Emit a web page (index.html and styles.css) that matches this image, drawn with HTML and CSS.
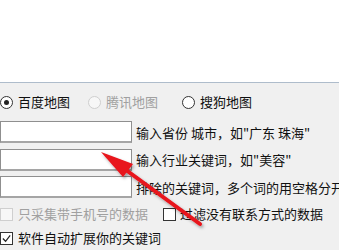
FILE: index.html
```html
<!DOCTYPE html>
<html>
<head>
<meta charset="utf-8">
<link rel="stylesheet" href="styles.css">
</head>
<body>
<div class="top"></div>
<div class="panel">
  <div class="radios">
    <label class="opt"><span class="radio checked"></span><span class="txt">百度地图</span></label>
    <label class="opt opt2 disabled"><span class="radio"></span><span class="txt">腾讯地图</span></label>
    <label class="opt opt3"><span class="radio"></span><span class="txt">搜狗地图</span></label>
  </div>
  <div class="fields">
    <div class="field"><span class="box"></span><span class="label">输入省份 城市，如"广东 珠海"</span></div>
    <div class="field"><span class="box"></span><span class="label">输入行业关键词，如"美容"</span></div>
    <div class="field"><span class="box"></span><span class="label">排除的关键词，多个词的用空格分开</span></div>
  </div>
  <div class="checks">
    <div class="crow">
      <label class="opt disabled"><span class="check"></span><span class="txt">只采集带手机号的数据</span></label>
      <label class="opt optc2"><span class="check"></span><span class="txt">过滤没有联系方式的数据</span></label>
    </div>
    <div class="crow crow2">
      <label class="opt"><span class="check checked"><svg viewBox="0 0 12 12" width="11" height="11"><path d="M2 6 L5 9 L10 2.5" fill="none" stroke="#222" stroke-width="1.3"/></svg></span><span class="txt">软件自动扩展你的关键词</span></label>
    </div>
  </div>
</div>
<svg class="arrow" width="339" height="250" viewBox="0 0 339 250">
  <defs>
    <filter id="sh" x="-20%" y="-20%" width="140%" height="140%">
      <feDropShadow dx="1.5" dy="2" stdDeviation="1.5" flood-color="#000" flood-opacity="0.35"/>
    </filter>
  </defs>
  <g filter="url(#sh)">
    <line x1="126" y1="170" x2="200" y2="224" stroke="#e8131b" stroke-width="4" stroke-linecap="round"/>
    <polygon points="101,152 133,164 123,177" fill="#e8131b"/>
  </g>
</svg>
</body>
</html>
```
FILE: styles.css
```css
html, body {
  margin: 0;
  padding: 0;
}
body {
  width: 339px;
  height: 250px;
  overflow: hidden;
  position: relative;
  background: #f0f0f0;
  font-family: "Noto Sans CJK SC", "Microsoft YaHei", sans-serif;
  font-size: 13px;
  color: #111;
}
.top {
  height: 82px;
  background: #ffffff;
  border-bottom: 1px solid #aebccb;
}
.panel {
  padding-top: 9px;
}
.radios {
  display: flex;
  align-items: center;
  height: 20px;
}
.opt {
  display: flex;
  align-items: center;
  white-space: nowrap;
  line-height: 16px;
}
.opt .txt {
  margin-left: 5px;
}
.opt2 {
  margin-left: 18px;
}
.opt3 {
  margin-left: 24px;
}
.disabled .txt {
  color: #a0a0a0;
}
.radio {
  width: 11px;
  height: 11px;
  border: 1px solid #333;
  border-radius: 50%;
  background: #fff;
  position: relative;
  flex: none;
}
.radio.checked::after {
  content: "";
  position: absolute;
  left: 3px;
  top: 3px;
  width: 5px;
  height: 5px;
  border-radius: 50%;
  background: #222;
}
.disabled .radio {
  border-color: #cfcfcf;
  background: #f7f7f7;
}
.fields {
  margin-top: 9px;
  display: flex;
  flex-direction: column;
  gap: 5.5px;
}
.field {
  display: flex;
  align-items: center;
  height: 22px;
  white-space: nowrap;
}
.box {
  width: 130px;
  height: 19px;
  background: #fff;
  border: 1px solid #8f8f8f;
  border-bottom: 2px solid #a5a5a5;
  flex: none;
}
.label {
  margin-left: 4px;
}
.checks {
  margin-top: 8px;
}
.crow {
  display: flex;
  align-items: center;
  height: 16px;
}
.crow2 {
  margin-top: 8px;
}
.check {
  width: 11px;
  height: 11px;
  border: 1px solid #333;
  background: #fff;
  flex: none;
  display: flex;
  align-items: center;
  justify-content: center;
}
.disabled .check {
  border-color: #cfcfcf;
  background: #f7f7f7;
}
.optc2 {
  margin-left: 15px;
}
.optc2 .txt {
  margin-left: 4px;
}
.arrow {
  position: absolute;
  left: 0;
  top: 0;
}
```
